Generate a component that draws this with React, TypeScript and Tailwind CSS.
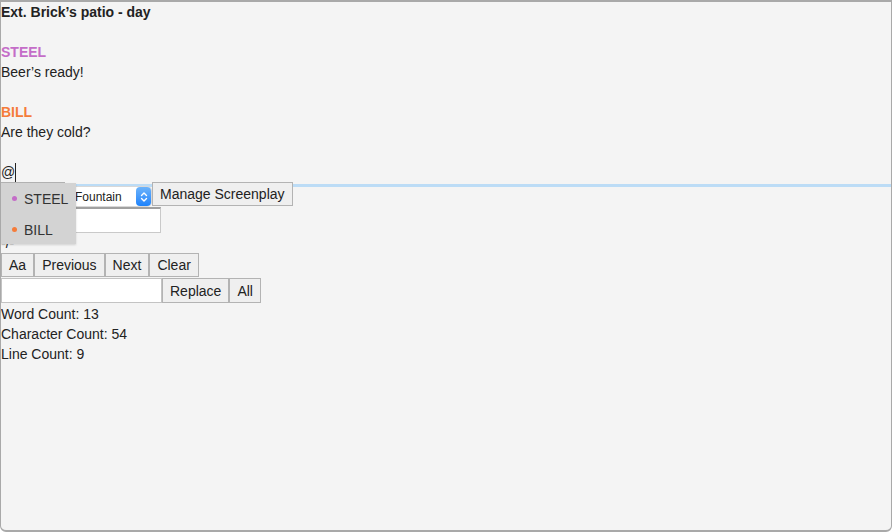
import React from "react";

const Btn = ({ children, className = "" }: { children?: React.ReactNode; className?: string }) => (
    <button className={`h-[24px] px-[7px] border border-[#b3b3b3] bg-[#efefef] text-[14px] leading-none text-[#222] ${className}`}>
        {children}
    </button>
);

const App = () => {
    const characters = [
        { name: "STEEL", color: "bg-[#c46dc8]" },
        { name: "BILL", color: "bg-[#f57c3a]" },
    ];

    return (
        <div className="w-[892px] h-[532px] bg-[#f4f4f4] border-t-2 border-x border-b-2 border-[#a9a9a9] rounded-b-[6px] text-[#222] text-[14px] leading-[20px] font-['Liberation_Sans',Arial,sans-serif] overflow-hidden">
            {/* editor */}
            <div className="h-[180px] shadow-[0_2px_0_0_#f4f4f4,0_5px_0_0_#bcdcf6]">
                <div className="font-bold">Ext. Brick’s patio - day</div>
                <div className="h-[20px]"></div>
                <div className="font-bold text-[#c46dc8]">STEEL</div>
                <div>Beer’s ready!</div>
                <div className="h-[20px]"></div>
                <div className="font-bold text-[#f57c3a]">BILL</div>
                <div>Are they cold?</div>
                <div className="h-[20px]"></div>
                <div className="flex items-center">@<span className="inline-block w-px h-[19px] bg-[#222]"></span></div>
            </div>

            {/* controls */}
            <div className="relative z-10">
                <div className="flex items-start h-[25px]">
                    <Btn className="w-[64px]"></Btn>
                    <div className="ml-[7px] mt-[5px] w-[79px] h-[19px] bg-white flex items-center justify-between rounded-[4px] shadow-[0_0_0_1px_#d8d8d8]">
                        <span className="pl-[3px] text-[12px] leading-none">Fountain</span>
                        <span className="w-[15px] h-[19px] rounded-[4px] bg-gradient-to-b from-[#6cb3fa] to-[#1a82fb] flex items-center justify-center">
                            <svg width="8" height="12" viewBox="0 0 8 12" fill="none" stroke="white" strokeWidth="1.4" strokeLinecap="round" strokeLinejoin="round">
                                <path d="M1.5 4.5 L4 2 L6.5 4.5" />
                                <path d="M1.5 7.5 L4 10 L6.5 7.5" />
                            </svg>
                        </span>
                    </div>
                    <Btn className="ml-[1px]">Manage Screenplay</Btn>
                </div>
                <input className="block w-[160px] h-[26px] bg-white border border-[#c9c9c9] border-t-2 border-t-[#a0a0a0] outline-none" />
                <div>-/-</div>
                <div className="flex">
                    <Btn>Aa</Btn>
                    <Btn>Previous</Btn>
                    <Btn>Next</Btn>
                    <Btn>Clear</Btn>
                </div>
                <div className="flex mt-px">
                    <input className="w-[161px] h-[25px] bg-white border border-[#c3c3c3] outline-none" />
                    <Btn className="h-[25px]">Replace</Btn>
                    <Btn className="h-[25px]">All</Btn>
                </div>
                <div className="mt-px">Word Count: 13</div>
                <div>Character Count: 54</div>
                <div>Line Count: 9</div>

                {/* autocomplete */}
                <div className="absolute left-0 top-px w-[75px] h-[61px] bg-[#d3d3d3] text-[#333] shadow-[0_1px_2px_rgba(0,0,0,0.15)]">
                    {characters.map((c) => (
                        <div key={c.name} className="flex items-center h-[31px] pl-[11px]">
                            <span className={`w-[5px] h-[5px] rounded-full ${c.color} mr-[7px]`}></span>
                            {c.name}
                        </div>
                    ))}
                </div>
            </div>
        </div>
    );
};

export default App;
